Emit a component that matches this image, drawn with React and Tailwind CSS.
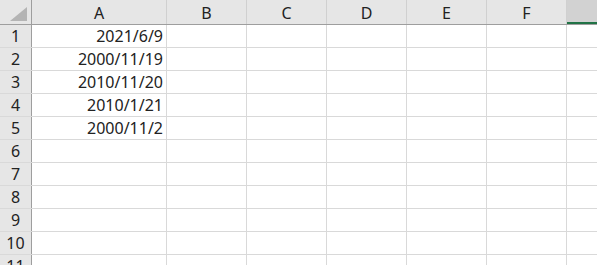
import React from 'react';

const cols = ['A', 'B', 'C', 'D', 'E', 'F'];
const data = ['2021/6/9', '2000/11/19', '2010/11/20', '2010/1/21', '2000/11/2'];
const rows = [1, 2, 3, 4, 5, 6, 7, 8, 9, 10, 11];

const Sheet = () => {
  return (
    <div className="w-[597px] h-[265px] overflow-hidden bg-white font-['Noto_Sans',sans-serif] text-[16px] text-[#222]">
      {/* column headers */}
      <div className="flex h-[25px] bg-[#e6e6e6] border-b border-[#9e9e9e]">
        <div className="w-[32px] shrink-0 border-r border-[#9e9e9e] flex items-end justify-end pr-[4px] pb-[3px]">
          <svg width="17" height="14" viewBox="0 0 17 14">
            <polygon points="17,0 17,14 0,14" fill="#b4b4b4" />
          </svg>
        </div>
        {cols.map((c, i) => (
          <div
            key={c}
            className={`${i === 0 ? 'w-[135px]' : 'w-[80px]'} shrink-0 border-r border-[#d0d0d0] flex items-center justify-center leading-none pt-[2px]`}
          >
            {c}
          </div>
        ))}
        <div className="flex-1 bg-[#d2d2d2] border-b-2 border-[#217346]" />
      </div>

      {/* rows */}
      {rows.map((r, ri) => (
        <div key={r} className="flex h-[23px] border-b border-[#d9d9d9]">
          <div className="w-[32px] shrink-0 bg-[#e6e6e6] border-r border-[#9e9e9e] flex items-end justify-center leading-none pb-[3px]">
            {r}
          </div>
          <div className="w-[135px] shrink-0 border-r border-[#d9d9d9] flex items-end justify-end pr-[3px] leading-none pb-[3px]">
            {data[ri] || ''}
          </div>
          {cols.slice(1).map((c) => (
            <div key={c} className="w-[80px] shrink-0 border-r border-[#d9d9d9]" />
          ))}
          <div className="flex-1" />
        </div>
      ))}
    </div>
  );
};

export default function App() {
  return <Sheet />;
}
